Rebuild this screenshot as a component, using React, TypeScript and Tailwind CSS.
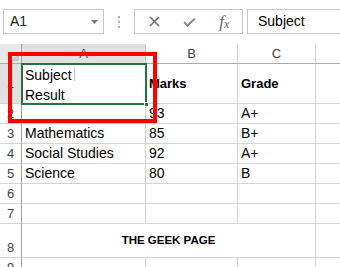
import React from "react";

const font = { fontFamily: '"Liberation Sans", Arial, sans-serif' };

function RowHead({ n, sel = false, bottom = false }: { n: string; sel?: boolean; bottom?: boolean }) {
  return (
    <div
      className={`flex justify-center ${bottom ? "items-end pb-[3px] leading-none" : "items-center"} border-b border-[#d4d4d4] border-r border-r-[#9e9e9e] text-[13px] text-[#444] ${sel ? "bg-[#e1e1e1]" : "bg-white"}`}
    >
      {n}
    </div>
  );
}

function Cell({ children, bold = false, last = false }: { children?: React.ReactNode; bold?: boolean; last?: boolean }) {
  return (
    <div
      className={`flex items-center pl-[3px] border-b border-[#d4d4d4] ${last ? "" : "border-r"} text-black ${bold ? "font-bold text-[13px]" : "text-[14px]"}`}
    >
      {children}
    </div>
  );
}

export default function App() {
  const rows: [string, string, string][] = [
    ["", "93", "A+"],
    ["Mathematics", "85", "B+"],
    ["Social Studies", "92", "A+"],
    ["Science", "80", "B"],
    ["", "", ""],
    ["", "", ""],
  ];
  return (
    <div className="relative w-[340px] h-[267px] overflow-hidden bg-white" style={font}>
      {/* formula bar */}
      <div className="flex items-start h-[44px] pt-[9px]">
        <div className="ml-[3px] w-[101px] h-[25px] border border-[#c6c6c6] flex items-center justify-between pl-[6px] pr-[5px] text-[14px] text-[#222]">
          <span>A1</span>
          <svg width="7" height="4" viewBox="0 0 7 4">
            <path d="M0 0 L7 0 L3.5 4 Z" fill="#777" />
          </svg>
        </div>
        <div className="w-[30px] h-[25px] flex flex-col items-center justify-center gap-[3px]">
          <div className="w-[2px] h-[2px] bg-[#b0b0b0]" />
          <div className="w-[2px] h-[2px] bg-[#b0b0b0]" />
          <div className="w-[2px] h-[2px] bg-[#b0b0b0]" />
        </div>
        <div className="w-[109px] h-[25px] border border-[#c6c6c6] flex items-center">
          <div className="w-[38px] flex justify-center pl-[1px]">
            <svg width="11" height="11" viewBox="0 0 11 11">
              <path d="M1 1 L10 10 M10 1 L1 10" stroke="#6f6f6f" strokeWidth="1.6" />
            </svg>
          </div>
          <div className="w-[34px] flex justify-center">
            <svg width="13" height="10" viewBox="0 0 13 10">
              <path d="M1 5 L4.5 8.5 L12 1.5" stroke="#8a8a8a" strokeWidth="2" fill="none" />
            </svg>
          </div>
          <div className="w-[36px] flex justify-center items-center text-[#666] italic" style={{ fontFamily: '"Liberation Serif", serif' }}>
            <span className="text-[17px] leading-none">f</span>
            <span className="text-[12px] leading-none mt-[4px]">x</span>
          </div>
        </div>
        <div className="ml-[4px] flex-1 h-[25px] border border-[#c6c6c6] border-r-0 flex items-center pl-[10px] text-[14px] text-black">
          Subject
        </div>
      </div>

      {/* sheet */}
      <div className="grid grid-cols-[22px_124px_92px_78px_1fr] grid-rows-[20px_40px_20px_20px_20px_20px_20px_20px_34px_20px]">
        {/* header row */}
        <div className="relative bg-[#e9e9e9] border-b border-[#ababab] border-r border-r-[#9e9e9e]">
          <svg className="absolute right-[2px] bottom-[2px]" width="8" height="8" viewBox="0 0 8 8">
            <path d="M8 0 L8 8 L0 8 Z" fill="#c8c8c8" />
          </svg>
        </div>
        <div className="flex items-center justify-center bg-[#e1e1e1] border-b border-[#ababab] border-r border-r-[#c6c6c6] text-[13px] text-[#217346]">A</div>
        <div className="flex items-center justify-center bg-white border-b border-[#ababab] border-r border-r-[#d4d4d4] text-[13px] text-[#444]">B</div>
        <div className="flex items-center justify-center bg-white border-b border-[#ababab] border-r border-r-[#d4d4d4] text-[13px] text-[#444]">C</div>
        <div className="bg-white border-b border-[#ababab]" />

        {/* row 1 */}
        <RowHead n="1" sel />
        <div className="flex flex-col pl-[3px] pt-[1px] border-b border-r border-[#d4d4d4] text-[14px] text-black leading-[20px]">
          <span className="relative w-fit pr-[3px]">
            Subject
            <span className="absolute right-0 top-[2px] w-[1px] h-[14px] bg-[#c8c8c8]" />
          </span>
          <span>Result</span>
        </div>
        <Cell bold>Marks</Cell>
        <Cell bold>Grade</Cell>
        <Cell last />

        {rows.map((r, i) => (
          <React.Fragment key={i}>
            <RowHead n={String(i + 2)} />
            <Cell>{r[0]}</Cell>
            <Cell>{r[1]}</Cell>
            <Cell>{r[2]}</Cell>
            <Cell last />
          </React.Fragment>
        ))}

        {/* row 8 merged */}
        <RowHead n="8" bottom />
        <div className="col-span-3 flex items-center justify-center border-b border-r border-[#d4d4d4] text-[11.5px] font-bold text-black">
          THE GEEK PAGE
        </div>
        <Cell last />

        {/* row 9 */}
        <RowHead n="9" />
        <Cell />
        <Cell />
        <Cell />
        <Cell last />
      </div>

      {/* selection */}
      <div className="absolute left-[21px] top-[63px] w-[126px] h-[42px] border-2 border-[#217346]">
        <div className="absolute right-[-4px] bottom-[-4px] w-[5px] h-[5px] bg-[#217346] border border-white" />
      </div>

      {/* red annotation box */}
      <div className="absolute left-[8px] top-[52px] w-[149px] h-[71px] border-4 border-[#ff0000]" />
    </div>
  );
}
